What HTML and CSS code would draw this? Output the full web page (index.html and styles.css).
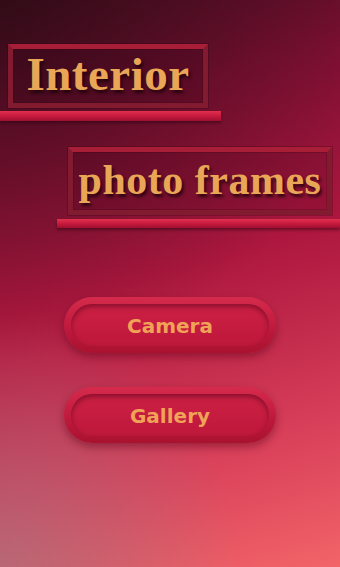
FILE: index.html
```html
<!DOCTYPE html>
<html>
<head>
<meta charset="utf-8">
<link rel="stylesheet" href="styles.css">
</head>
<body>
<main class="screen">
  <div class="frame frame-one"><h1 class="title">Interior</h1></div>
  <div class="shelf shelf-one"></div>
  <div class="frame frame-two"><h1 class="title title-two">photo frames</h1></div>
  <div class="shelf shelf-two"></div>
  <div class="buttons">
    <div class="btn"><div class="btn-inner">Camera</div></div>
    <div class="btn"><div class="btn-inner">Gallery</div></div>
  </div>
</main>
</body>
</html>
```

FILE: styles.css
```css
html, body {
  margin: 0;
  padding: 0;
}
body {
  width: 340px;
  height: 567px;
  overflow: hidden;
}
.screen {
  width: 340px;
  height: 567px;
  display: flex;
  flex-direction: column;
  align-items: flex-start;
  background:
    radial-gradient(circle at 0% 0%, rgba(30, 10, 15, 0.55), rgba(30, 10, 15, 0) 55%),
    radial-gradient(ellipse 70% 45% at 0% 100%, rgba(150, 125, 135, 0.55), rgba(150, 125, 135, 0) 100%),
    linear-gradient(165deg, #4a0d22 0%, #7a0f32 20%, #ae173f 48%, #d9405a 78%, #f26468 100%);
}
.frame {
  box-sizing: border-box;
  border: 5px solid #821a30;
  border-top-color: #a81e36;
  background: rgba(50, 0, 18, 0.15);
  box-shadow: 0 0 0 1px rgba(40, 0, 10, 0.25), inset 0 0 0 1px rgba(40, 0, 10, 0.2);
  display: flex;
  align-items: center;
  justify-content: center;
}
.frame-one {
  margin: 44px 0 0 8px;
  width: 200px;
  height: 64px;
}
.frame-two {
  margin: 26px 0 0 68px;
  width: 264px;
  height: 68px;
}
.title {
  margin: 0;
  font-family: "Liberation Serif", "Times New Roman", serif;
  font-weight: bold;
  font-size: 47px;
  line-height: 1;
  color: #eaa657;
  text-shadow: 2px 3px 3px rgba(25, 0, 8, 0.75);
  letter-spacing: 0.5px;
  padding-bottom: 3px;
}
.title-two {
  font-size: 42px;
  padding-bottom: 2px;
}
.shelf {
  height: 10px;
  background: linear-gradient(#e2304d, #c4193d 55%, #9e0f30);
  box-shadow: 0 2px 3px rgba(30, 0, 10, 0.45);
}
.shelf-one {
  margin-top: 3px;
  width: 221px;
}
.shelf-two {
  margin: 4px 0 0 57px;
  width: 283px;
  height: 9px;
}
.buttons {
  margin: 69px 0 0 64px;
  display: flex;
  flex-direction: column;
  gap: 34px;
}
.btn {
  box-sizing: border-box;
  width: 212px;
  height: 56px;
  padding: 7px;
  border-radius: 28px;
  background: linear-gradient(#d52a4c, #bd183c 60%, #a9122f);
  box-shadow: 0 4px 8px rgba(90, 0, 25, 0.45);
}
.btn-inner {
  height: 100%;
  border-radius: 21px;
  background: rgba(200, 30, 65, 0.55);
  box-shadow: inset 0 3px 5px rgba(90, 0, 25, 0.55);
  display: flex;
  align-items: center;
  justify-content: center;
  font-family: "DejaVu Sans", "Comic Sans MS", sans-serif;
  font-weight: bold;
  font-size: 20px;
  color: #f0a356;
  padding-top: 2px;
  box-sizing: border-box;
}
```
